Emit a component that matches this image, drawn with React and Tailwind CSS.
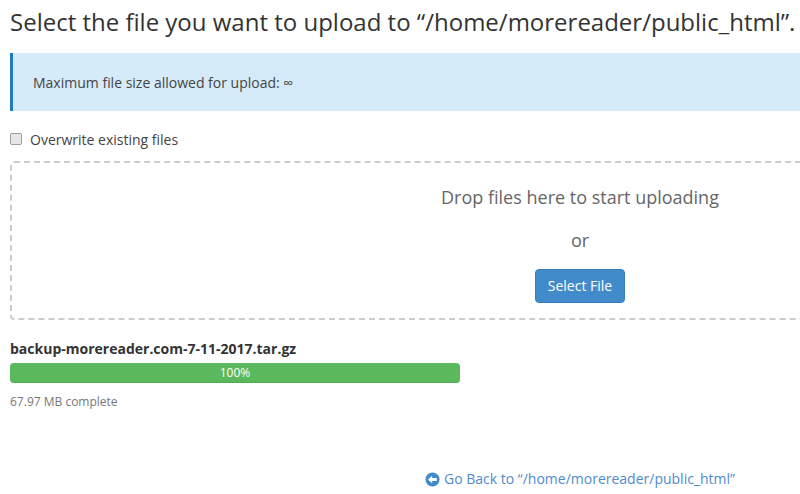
import React from "react";

export default function App() {
  return (
    <div className="w-[800px] h-[494px] overflow-hidden bg-white font-['Open_Sans',sans-serif] text-[14px] text-[#333]">
      <div className="w-[1140px] ml-[10px]">
        <h1 className="text-[24px] leading-[26px] font-normal pt-[9px] h-[53px] whitespace-nowrap">
          Select the file you want to upload to “/home/morereader/public_html”.
        </h1>
        <div className="h-[58px] flex items-center pl-[20px] bg-[#d6ebf9] border-l-[3px] border-[#1f7dbd] text-[14px] text-[#444]">
          Maximum file size allowed for upload: ∞
        </div>
        <label className="flex items-center gap-[8px] h-[20px] mt-[18px] text-[14px] text-[#444]">
          <input type="checkbox" className="appearance-none w-[12px] h-[12px] m-0 bg-[#e6e6e6] border border-[#a0a0a0] rounded-[2px]" />
          Overwrite existing files
        </label>
        <div className="mt-[12px] h-[159px] border-2 border-dashed border-[#ccc] rounded-[4px] flex flex-col items-center">
          <div className="mt-[22px] text-[18px] leading-[24px] text-[#666]">Drop files here to start uploading</div>
          <div className="mt-[19px] text-[18px] leading-[24px] text-[#666]">or</div>
          <button className="mt-[17px] w-[90px] h-[34px] pb-[1px] bg-[#428bca] border border-[#357ebd] rounded-[4px] text-white text-[14px]">
            Select File
          </button>
        </div>
        <div className="mt-[19px] text-[14px] leading-[20px] font-bold">backup-morereader.com-7-11-2017.tar.gz</div>
        <div className="mt-[4px] w-[450px] h-[20px] bg-[#5cb85c] rounded-[4px] border-b border-[#4cae4c] flex items-center justify-center text-white text-[12px]">
          100%
        </div>
        <div className="mt-[10px] text-[12px] leading-[17px] text-[#777]">67.97 MB complete</div>
        <div className="mt-[59px] flex items-center justify-center gap-[4px] text-[14px] leading-[20px] text-[#4f8bce]">
          <svg viewBox="0 0 16 16" className="w-[15px] h-[15px]">
            <circle cx="8" cy="8" r="7.5" fill="#428bca" />
            <path d="M3.2 8 L7.6 3.9 L7.6 6.5 L12.6 6.5 L12.6 9.5 L7.6 9.5 L7.6 12.1 Z" fill="#fff" />
          </svg>
          <span>Go Back to “/home/morereader/public_html”</span>
        </div>
      </div>
    </div>
  );
}
